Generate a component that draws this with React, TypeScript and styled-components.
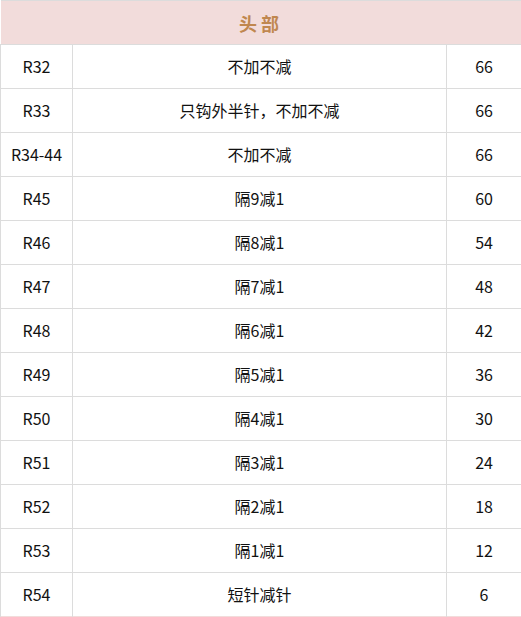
import styled, { createGlobalStyle } from "styled-components";

const GlobalStyle = createGlobalStyle`
  html, body {
    margin: 0;
    padding: 0;
    background: #fff;
  }
  body {
    font-family: "Noto Sans CJK SC", "Liberation Sans", sans-serif;
  }
`;

const Table = styled.table`
  width: 521px;
  border-collapse: collapse;
  table-layout: fixed;
  border-top: 1px solid #dcdcdc;
  border-bottom: 1px solid #f2dcdb;
`;

const Col = styled.col<{ $w: number }>`
  width: ${(p) => p.$w}px;
`;

const HeadCell = styled.th`
  height: 43px;
  padding: 0;
  background: #f2dcdb;
  color: #c0874f;
  font-size: 18px;
  font-weight: bold;
  letter-spacing: 4px;
  text-align: center;
`;

const Cell = styled.td<{ $last?: boolean }>`
  height: 41px;
  padding: 0 0 2px;
  border: 1px solid #dcdcdc;
  border-bottom: ${(p) => (p.$last ? "none" : "1px solid #dcdcdc")};
  color: #111;
  font-size: 16px;
  text-align: center;
  vertical-align: middle;
`;

const rows: [string, string, string][] = [
  ["R32", "不加不减", "66"],
  ["R33", "只钩外半针，不加不减", "66"],
  ["R34-44", "不加不减", "66"],
  ["R45", "隔9减1", "60"],
  ["R46", "隔8减1", "54"],
  ["R47", "隔7减1", "48"],
  ["R48", "隔6减1", "42"],
  ["R49", "隔5减1", "36"],
  ["R50", "隔4减1", "30"],
  ["R51", "隔3减1", "24"],
  ["R52", "隔2减1", "18"],
  ["R53", "隔1减1", "12"],
  ["R54", "短针减针", "6"],
];

export default function App() {
  return (
    <>
      <GlobalStyle />
      <Table>
        <colgroup>
          <Col $w={72} />
          <Col $w={374} />
          <Col $w={75} />
        </colgroup>
        <thead>
          <tr>
            <HeadCell colSpan={3}>头部</HeadCell>
          </tr>
        </thead>
        <tbody>
          {rows.map(([r, desc, n], i) => {
            const last = i === rows.length - 1;
            return (
              <tr key={r}>
                <Cell $last={last}>{r}</Cell>
                <Cell $last={last}>{desc}</Cell>
                <Cell $last={last}>{n}</Cell>
              </tr>
            );
          })}
        </tbody>
      </Table>
    </>
  );
}
